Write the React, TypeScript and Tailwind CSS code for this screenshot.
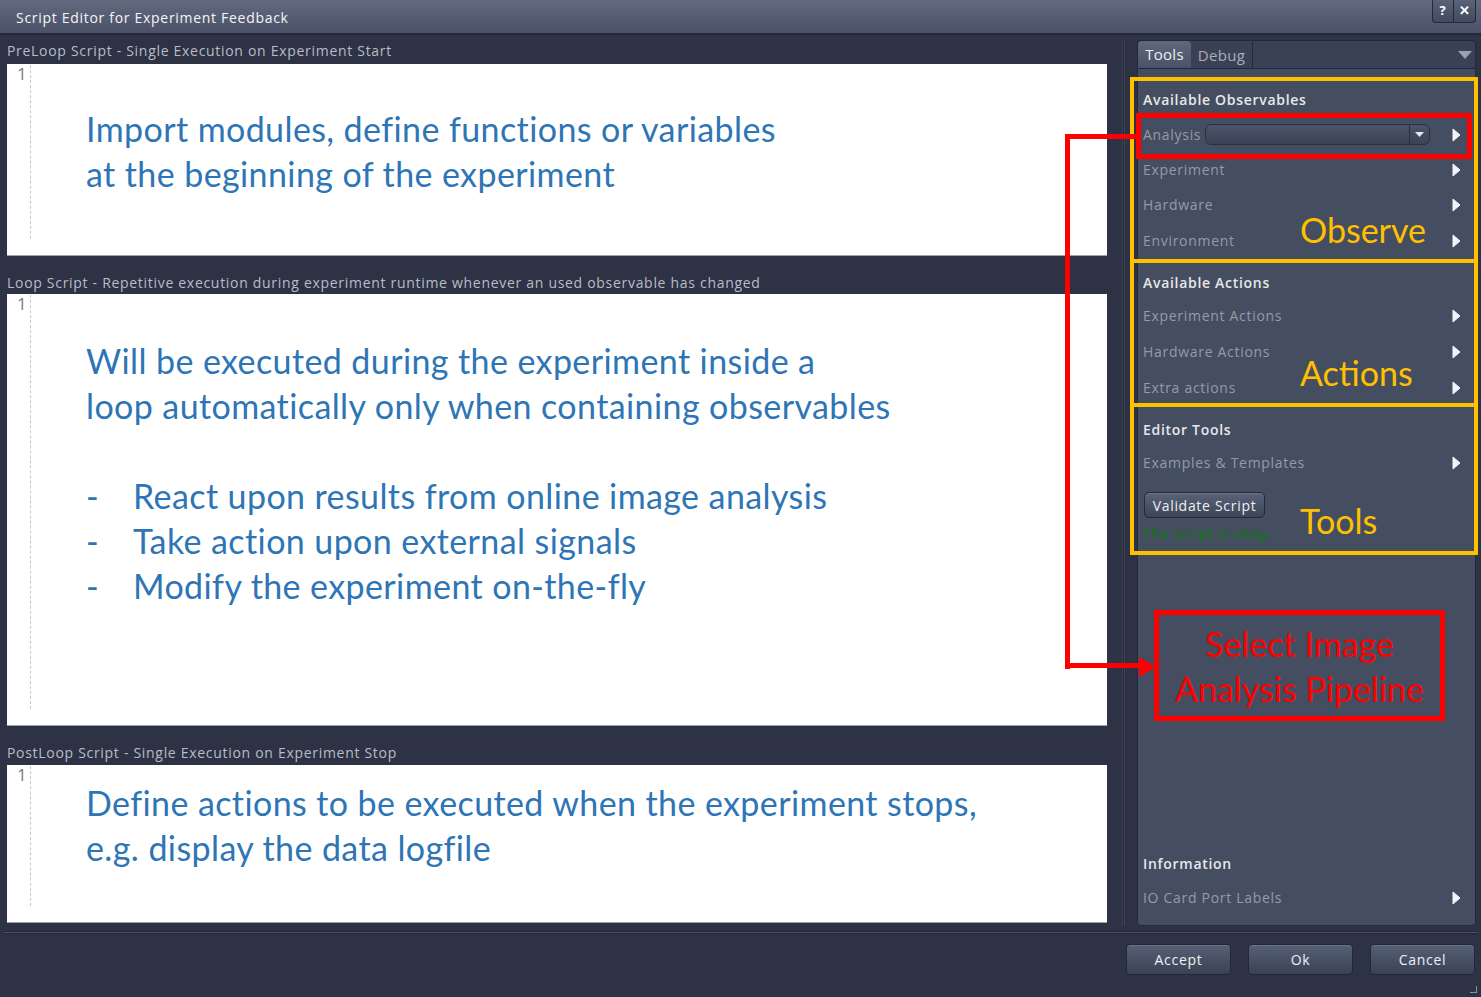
import React from "react";

const ui = { fontFamily: '"Open Sans", "Noto Sans", sans-serif', letterSpacing: "0.7px" };
const note = { fontFamily: 'Lato, "Open Sans", sans-serif' };
const mark = { fontFamily: 'Lato, "Open Sans", sans-serif', letterSpacing: "0px" };

const Play = () => (
	<svg width="9" height="14" viewBox="0 0 9 14" className="shrink-0">
		<path d="M1 1 L8 7 L1 13 Z" fill="#f2f3f6" stroke="#f2f3f6" strokeWidth="1" strokeLinejoin="round" />
	</svg>
);

const Editor = ({ height, pad, lines }: { height: string; pad: string; lines: React.ReactNode }) => (
	<div className={`flex bg-white border-b border-[#9aa0ad] ${height}`}>
		<div className="w-[24px] shrink-0 pb-[16px] pt-[1px]">
			<div className="h-full border-r border-dashed border-[#c8c8c8] pl-[10px] text-[17px] leading-[18px] text-[#7a7a7a]" style={ui}>
				1
			</div>
		</div>
		<div className={`pl-[55px] ${pad} text-[34px] leading-[45px] tracking-[0.4px] text-[#2e75b6]`} style={note}>
			{lines}
		</div>
	</div>
);

const Label = ({ text, h }: { text: string; h: string }) => (
	<div className={`flex items-end ${h} text-[14px] text-[#b9bdc7]`} style={ui}>
		{text}
	</div>
);

const Row = ({ label, bold, h = "h-[35px]" }: { label: string; bold?: boolean; h?: string }) => (
	<div className={`flex ${h} items-center justify-between pl-[5px] pr-[14px]`}>
		<span className={bold ? "text-[14px] font-semibold text-[#e6e8ec]" : "text-[14px] text-[#959aa8]"}>{label}</span>
		{!bold && <Play />}
	</div>
);

const Btn = ({ text }: { text: string }) => (
	<div className="flex h-[31px] w-[105px] items-center justify-center rounded-[4px] border border-[#232836] bg-linear-to-b from-[#566075] to-[#3a4154] text-[14px] text-[#eef0f3] shadow-[inset_0_1px_0_#6a7388]">
		{text}
	</div>
);

export default function App() {
	return (
		<div className="relative flex h-[997px] w-[1481px] flex-col overflow-hidden bg-[#2d3245]" style={ui}>
			{/* title bar */}
			<div className="flex h-[35px] shrink-0 items-center justify-between border-b-2 border-[#23283a] bg-linear-to-b from-[#626a7f] to-[#4b5267] pl-[16px]">
				<span className="pt-[2px] text-[14px] text-[#f4f5f7]">Script Editor for Experiment Feedback</span>
				<div className="mr-[5px] flex h-[23px] self-start rounded-b-[4px] border border-t-0 border-[#23283a] bg-linear-to-b from-[#5a6277] to-[#434a5e] text-[13px] font-bold text-white">
					<span className="flex w-[21px] items-center justify-center border-r border-[#23283a]">?</span>
					<span className="flex w-[21px] items-center justify-center">✕</span>
				</div>
			</div>

			<div className="flex h-[891px] shrink-0">
				{/* editors */}
				<div className="flex w-[1114px] shrink-0 flex-col pl-[7px] pr-[7px]">
					<Label text="PreLoop Script - Single Execution on Experiment Start" h="h-[29px] pb-[3px]" />
					<Editor
						height="h-[192px]"
						pad="pt-[42px]"
						lines={
							<>
								<div>Import modules, define functions or variables</div>
								<div>at the beginning of the experiment</div>
							</>
						}
					/>
					<Label text="Loop Script - Repetitive execution during experiment runtime whenever an used observable has changed" h="h-[38px] pb-[1px]" />
					<Editor
						height="h-[432px]"
						pad="pt-[44px]"
						lines={
							<>
								<div>Will be executed during the experiment inside a</div>
								<div>loop automatically only when containing observables</div>
								<div className="h-[45px]" />
								{["React upon results from online image analysis", "Take action upon external signals", "Modify the experiment on-the-fly"].map((t) => (
									<div key={t} className="flex">
										<span className="w-[47px]">-</span>
										<span>{t}</span>
									</div>
								))}
							</>
						}
					/>
					<Label text="PostLoop Script - Single Execution on Experiment Stop" h="h-[39px] pb-[2px]" />
					<Editor
						height="h-[158px]"
						pad="pt-[15px]"
						lines={
							<>
								<div>Define actions to be executed when the experiment stops,</div>
								<div>e.g. display the data logfile</div>
							</>
						}
					/>
				</div>

				{/* splitter */}
				<div className="w-[23px] shrink-0 pt-[6px]">
					<div className="ml-[8px] h-full w-[3px] border-x border-[#3c4356] bg-[#262b3b]" />
				</div>

				{/* tool panel */}
				<div className="flex w-[339px] shrink-0 flex-col pt-[5px]">
					<div className="flex h-[28px] items-end rounded-t-[4px] border border-b-0 border-[#23283a] bg-[#3a4154]">
						<div className="flex h-[27px] w-[53px] items-center justify-center rounded-t-[4px] bg-linear-to-b from-[#5f687d] to-[#4a5266] text-[15px] tracking-[0.3px] text-[#eef0f3]">Tools</div>
						<div className="flex h-[26px] w-[62px] items-center justify-center border-r border-[#23283a] text-[15px] tracking-[0.3px] text-[#a9aebb]">Debug</div>
						<div className="flex-1" />
						<svg width="14" height="8" viewBox="0 0 14 8" className="mb-[9px] mr-[3px]">
							<path d="M0 0 L14 0 L7 8 Z" fill="#9aa0ad" />
						</svg>
					</div>
					<div className="flex flex-1 flex-col rounded-b-[4px] border border-[#23283a] bg-[#454d60] pb-[10px] pt-[15px] text-[#959aa8]">
						<Row label="Available Observables" bold h="h-[31px]" />
						<div className="h-[2px]" />
						<div className="flex h-[35px] items-center pl-[5px] pr-[14px]">
							<span className="w-[62px] text-[14px]">Analysis</span>
							<div className="flex h-[21px] w-[225px] rounded-[6px] border border-[#2a3040] bg-linear-to-b from-[#4c5469] to-[#3b4256]">
								<div className="flex-1" />
								<div className="flex w-[20px] items-center justify-center border-l border-[#2a3040]">
									<svg width="9" height="5" viewBox="0 0 9 5">
										<path d="M0 0 L9 0 L4.5 5 Z" fill="#e6e8ec" />
									</svg>
								</div>
							</div>
							<div className="flex-1" />
							<Play />
						</div>
						<Row label="Experiment" />
						<Row label="Hardware" />
						<div className="h-[1px]" />
						<Row label="Environment" />
						<div className="h-[9px]" />
						<Row label="Available Actions" bold h="h-[31px]" />
						<Row label="Experiment Actions" />
						<div className="h-[1px]" />
						<Row label="Hardware Actions" />
						<div className="h-[1px]" />
						<Row label="Extra actions" />
						<div className="h-[9px]" />
						<Row label="Editor Tools" bold h="h-[31px]" />
						<Row label="Examples & Templates" />
						<div className="pl-[6px] pt-[12px]">
							<div className="flex h-[26px] w-[121px] items-center justify-center rounded-[5px] border border-[#23283a] bg-linear-to-b from-[#5a6378] to-[#3d4458] text-[14px] text-[#eef0f3] shadow-[inset_0_1px_0_#6a7388]">
								Validate Script
							</div>
						</div>
						<div className="pl-[5px] pt-[6px] text-[14px] leading-[20px] text-[#0b7a0b]">The script is okay.</div>
						<div className="flex-1" />
						<Row label="Information" bold h="h-[31px]" />
						<div className="h-[1px]" />
						<Row label="IO Card Port Labels" />
					</div>
				</div>
			</div>

			{/* footer */}
			<div className="mx-[3px] mt-[5px] h-[3px] border-y border-[#23283a] bg-[#4a5266]" />
			<div className="flex flex-1 items-start justify-end gap-[17px] pr-[6px] pt-[10px]">
				<Btn text="Accept" />
				<Btn text="Ok" />
				<Btn text="Cancel" />
			</div>
			<div className="absolute bottom-[4px] right-[4px] h-[7px] w-[7px] border-b border-r border-[#8a90a0]" />

			{/* annotations */}
			<div className="absolute left-[1130px] top-[77px] h-[186px] w-[348px] border-[4px] border-[#ffc000]" />
			<div className="absolute left-[1130px] top-[259px] h-[148px] w-[348px] border-[4px] border-[#ffc000]" />
			<div className="absolute left-[1130px] top-[403px] h-[152px] w-[348px] border-[4px] border-[#ffc000]" />
			<div className="absolute left-[1300px] top-[208px] text-[34px] leading-[44px] text-[#ffc000]" style={mark}>Observe</div>
			<div className="absolute left-[1300px] top-[351px] text-[34px] leading-[44px] text-[#ffc000]" style={mark}>Actions</div>
			<div className="absolute left-[1300px] top-[499px] text-[34px] leading-[44px] text-[#ffc000]" style={mark}>Tools</div>

			<div className="absolute left-[1136px] top-[113px] h-[46px] w-[336px] border-[5px] border-[#ff0000]" />
			<div className="absolute left-[1065px] top-[134px] h-[5px] w-[72px] bg-[#ff0000]" />
			<div className="absolute left-[1065px] top-[134px] h-[535px] w-[5px] bg-[#ff0000]" />
			<div className="absolute left-[1065px] top-[663px] h-[5px] w-[76px] bg-[#ff0000]" />
			<svg className="absolute left-[1139px] top-[657px]" width="17" height="20" viewBox="0 0 17 20">
				<path d="M0 0 L17 10 L0 20 Z" fill="#ff0000" />
			</svg>
			<div
				className="absolute left-[1154px] top-[610px] flex h-[111px] w-[291px] flex-col items-center justify-center border-[5px] border-[#ff0000] text-[34px] leading-[45px] text-[#ff0000]"
				style={mark}
			>
				<div>Select Image</div>
				<div>Analysis Pipeline</div>
			</div>
		</div>
	);
}
